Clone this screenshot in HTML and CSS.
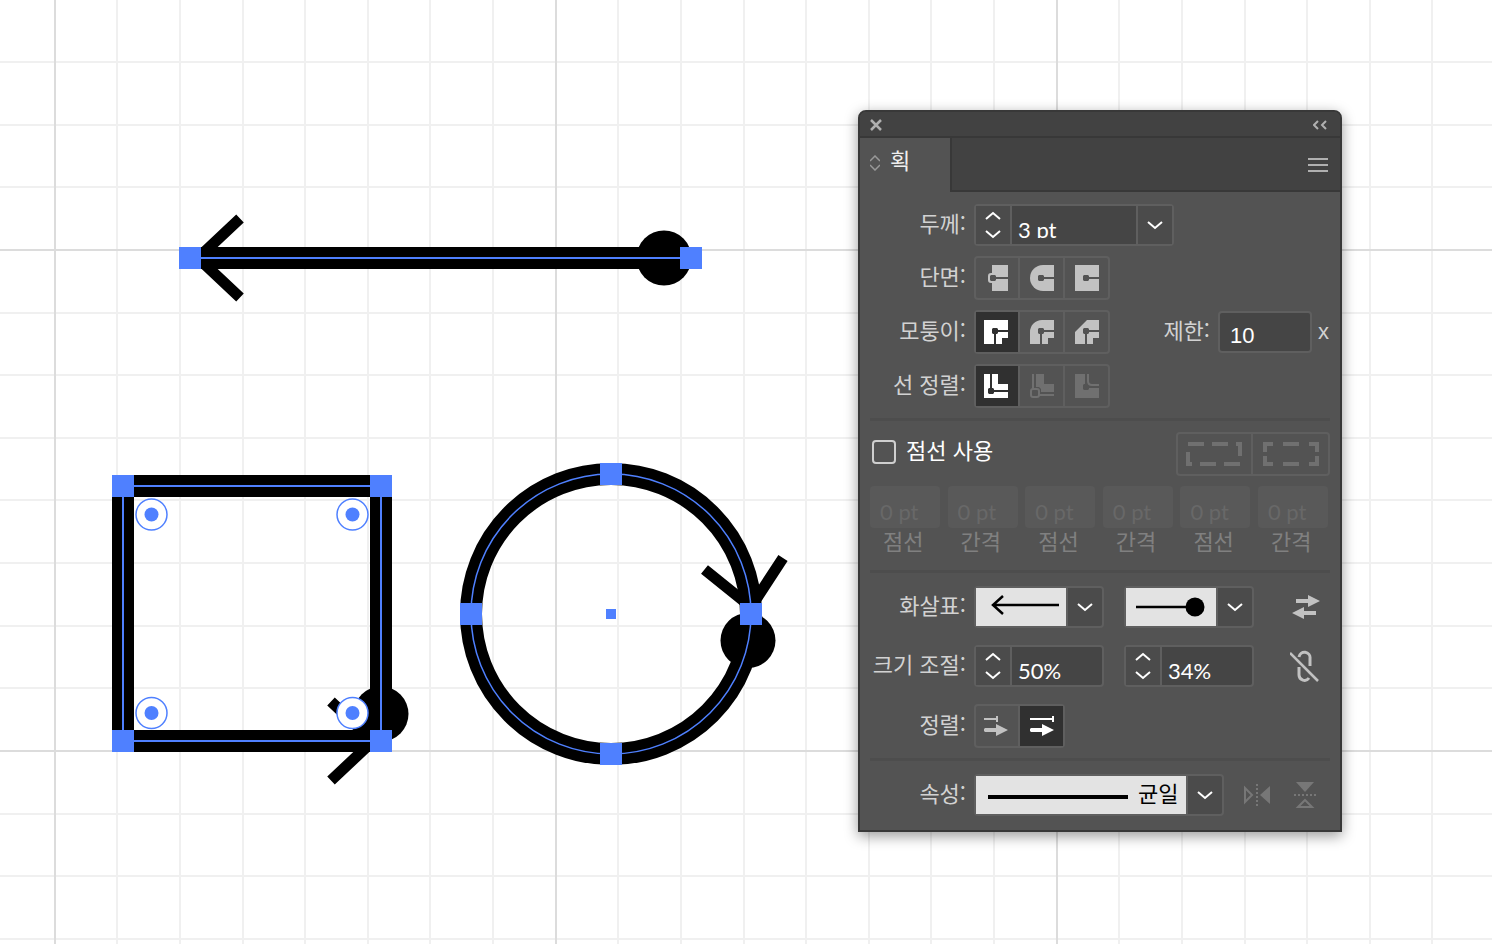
FILE: index.html
```html
<!DOCTYPE html>
<html lang="ko">
<head>
  <meta charset="UTF-8">
  <meta name="viewport" content="width=device-width, initial-scale=1.0">
  <title>획</title>
  <link rel="stylesheet" href="styles.css">
</head>
<body>
  <main class="workspace">
    <svg class="artboard" aria-hidden="true">
      <defs>
        <pattern id="grid" x="54" y="249" width="501" height="501" patternUnits="userSpaceOnUse">
          <path class="grid-minor" d="M63 0v501M126 0v501M189 0v501M251 0v501M314 0v501M376 0v501M439 0v501M0 64h501M0 126h501M0 189h501M0 251h501M0 314h501M0 377h501M0 439h501"/>
          <path class="grid-major" d="M1 0v501M0 1h501"/>
        </pattern>
      </defs>
      <rect width="100%" height="100%" fill="url(#grid)"/>

      <!-- line -->
      <path class="stroke" d="M198 258H664"/>
      <path class="arrow-head" d="M240 218.500L198 258l42 39.500"/>
      <circle cx="664" cy="258" r="27.500"/>
      <path class="guide" d="M190 258H691"/>
      <path class="anchor" d="M179 247h22v22h-22zM680 247h22v22h-22z"/>

      <!-- rectangle -->
      <rect class="stroke" x="123" y="486" width="258" height="255"/>
      <path class="arrow-head" d="M331 701.500L373 741l-42 39.500"/>
      <circle cx="381" cy="714" r="27.500"/>
      <rect class="guide" x="123" y="486" width="258" height="255"/>
      <path class="anchor" d="M112 475h22v22h-22zM370 475h22v22h-22zM112 730h22v22h-22zM370 730h22v22h-22z"/>
      <g class="corner">
        <circle cx="151.500" cy="514.500" r="15.500"/>
        <circle cx="352.500" cy="514.500" r="15.500"/>
        <circle cx="151.500" cy="713" r="15.500"/>
        <circle cx="352.500" cy="713" r="15.500"/>
      </g>
      <g class="anchor">
        <circle cx="151.500" cy="514.500" r="7"/>
        <circle cx="352.500" cy="514.500" r="7"/>
        <circle cx="151.500" cy="713" r="7"/>
        <circle cx="352.500" cy="713" r="7"/>
      </g>

      <!-- ellipse -->
      <circle class="stroke" cx="611" cy="614" r="140"/>
      <path class="arrow-head" d="M704.500 569.500L751 607l32-49"/>
      <circle cx="748" cy="640.500" r="27.500"/>
      <circle class="guide guide-thin" cx="611" cy="614" r="140"/>
      <path class="anchor" d="M600 463h22v22h-22zM600 743h22v22h-22zM460 603h22v22h-22zM740 603h22v22h-22zM606 609h10v10h-10z"/>
    </svg>

    <section class="panel" aria-label="획">
      <header class="title-bar">
        <button class="plain" aria-label="닫기">
          <svg width="12" height="12"><path class="line-bold" d="M1 1l10 10M11 1L1 11"/></svg>
        </button>
        <button class="plain" aria-label="축소">
          <svg width="14" height="10"><path class="line" d="M5 1L1 5l4 4M13 1L9 5l4 4"/></svg>
        </button>
      </header>
      <div class="tab-bar">
        <button class="tab">
          <svg width="10" height="16"><path class="line-thin" d="M0 6l5-5 5 5M0 10l5 5 5-5"/></svg>
          획
        </button>
        <button class="plain" aria-label="메뉴">
          <svg width="20" height="14"><path class="line" d="M0 1h20M0 7h20M0 13h20"/></svg>
        </button>
      </div>

      <div class="group">
        <div class="row">
          <label class="name" for="weight">두께:</label>
          <div class="box box-weight">
            <div class="stepper">
              <button aria-label="증가"><svg width="16" height="9"><path class="line" d="M1 8l7-6 7 6"/></svg></button>
              <button aria-label="감소"><svg width="16" height="9"><path class="line" d="M1 1l7 6 7-6"/></svg></button>
            </div>
            <input class="value" id="weight" type="text" value="3 pt">
            <div class="drop">
              <select aria-label="두께 목록"><option></option></select>
              <svg class="chevron" width="16" height="9"><path class="line" d="M1 1l7 6 7-6"/></svg>
            </div>
          </div>
        </div>

        <div class="row">
          <span class="name">단면:</span>
          <div class="buttons">
            <button aria-label="평평한 단면"><svg width="24" height="26"><path d="M8 0h16v26H8v-8H7a3 3 0 0 1-3-3v-4a3 3 0 0 1 3-3h1z"/><path class="cut" d="M7 10h4l1 1v1h12v2H12v1l-1 1H7l-1-1v-4z"/></svg></button>
            <button aria-label="둥근 단면"><svg width="24" height="26"><path d="M13 0h11v26H13a13 13 0 0 1 0-26z"/><path class="cut" d="M9 10h4l1 1v1h10v2H14v1l-1 1H9l-1-1v-4z"/></svg></button>
            <button aria-label="돌출된 단면"><svg width="24" height="26"><path d="M0 0h24v26H0z"/><path class="cut" d="M9 10h4l1 1v1h10v2H14v1l-1 1H9l-1-1v-4z"/></svg></button>
          </div>
        </div>

        <div class="row">
          <span class="name">모퉁이:</span>
          <div class="buttons">
            <button class="active" aria-label="각진 모퉁이"><svg width="24" height="24"><path d="M0 0h24v18h-6v6H0z"/><path class="cut" d="M9 8h4l1 1v1h10v2H14v1l-1 1h-1v10h-2V14H9l-1-1V9z"/></svg></button>
            <button aria-label="둥근 모퉁이"><svg width="24" height="24"><path d="M12 0h12v18h-6v6H0V12A12 12 0 0 1 12 0z"/><path class="cut" d="M9 8h4l1 1v1h10v2H14v1l-1 1h-1v10h-2V14H9l-1-1V9z"/></svg></button>
            <button aria-label="경사 모퉁이"><svg width="24" height="24"><path d="M12 0h12v18h-6v6H0V12z"/><path class="cut" d="M9 8h4l1 1v1h10v2H14v1l-1 1h-1v10h-2V14H9l-1-1V9z"/></svg></button>
          </div>
          <div class="limit">
            <label for="limit">제한:</label>
            <div class="box"><input class="value value-plain" id="limit" type="text" value="10"></div>
            <span class="unit">x</span>
          </div>
        </div>

        <div class="row">
          <span class="name">선 정렬:</span>
          <div class="buttons">
            <button class="active" aria-label="가운데"><svg width="24" height="24"><path d="M0 0h14v10h10v14H0z"/><path class="cut" d="M6 0h2v14h1l1 1v1h14v2H10v1l-1 1H5l-1-1v-4l1-1h1z"/></svg></button>
            <button disabled aria-label="안쪽"><svg width="24" height="24"><path d="M6 0h8v10h10v8H11v-3l-2-2H6z"/><path class="line" d="M3 0v15M9 21h15"/><rect class="line" x="1" y="15" width="8" height="8" rx="2"/></svg></button>
            <button disabled aria-label="바깥쪽"><svg width="24" height="24"><path d="M0 0h10v10H9l-1 1v4l1 1h4l1-1v-1h10v10H0z"/><path class="line" d="M13 0v7q0 4 4 4h7"/></svg></button>
          </div>
        </div>
      </div>

      <div class="group group-dash">
        <div class="row dash-row">
          <label class="check"><input type="checkbox">점선 사용</label>
          <div class="buttons buttons-dash">
            <button disabled aria-label="정확한 점선"><svg width="56" height="24"><path d="M2 0h16v4H2zM26 0h16v4H26zM50 0h6v14h-4V4h-2zM0 10h4v10h2v4H0zM14 20h16v4H14zM38 20h16v4H38z"/></svg></button>
            <button disabled aria-label="모퉁이에 맞춤"><svg width="56" height="24"><path d="M0 0h10v4H4v6H0zM20 0h16v4H20zM46 0h10v10h-4V4h-6zM0 14h4v6h6v4H0zM20 20h16v4H20zM52 14h4v10H46v-4h6z"/></svg></button>
          </div>
        </div>
        <div class="dashes">
          <label><input class="value" type="text" value="0 pt" disabled>점선</label>
          <label><input class="value" type="text" value="0 pt" disabled>간격</label>
          <label><input class="value" type="text" value="0 pt" disabled>점선</label>
          <label><input class="value" type="text" value="0 pt" disabled>간격</label>
          <label><input class="value" type="text" value="0 pt" disabled>점선</label>
          <label><input class="value" type="text" value="0 pt" disabled>간격</label>
        </div>
      </div>

      <div class="group group-arrows">
        <div class="row">
          <span class="name">화살표:</span>
          <div class="pair">
            <div class="box picker">
              <svg class="preview" width="90" height="38"><path class="preview-line" d="M83 17H17M27 8L17 17l10 9"/></svg>
              <select aria-label="시작 화살표"><option></option></select>
              <svg class="chevron" width="16" height="9"><path class="line" d="M1 1l7 6 7-6"/></svg>
            </div>
            <div class="box picker">
              <svg class="preview" width="90" height="38"><path class="preview-line" d="M10 19h55"/><circle cx="69" cy="19" r="9.500"/></svg>
              <select aria-label="끝 화살표"><option></option></select>
              <svg class="chevron" width="16" height="9"><path class="line" d="M1 1l7 6 7-6"/></svg>
            </div>
          </div>
          <button class="tool" aria-label="화살표 교체"><svg width="28" height="24"><path d="M4 4h12V0l12 6-12 6V8H4zM24 16H12v-4L0 18l12 6v-4h12z"/></svg></button>
        </div>

        <div class="row">
          <span class="name">크기 조절:</span>
          <div class="pair">
            <div class="box">
              <div class="stepper">
                <button aria-label="증가"><svg width="16" height="9"><path class="line" d="M1 8l7-6 7 6"/></svg></button>
                <button aria-label="감소"><svg width="16" height="9"><path class="line" d="M1 1l7 6 7-6"/></svg></button>
              </div>
              <input class="value" type="text" value="50%" aria-label="시작 크기">
            </div>
            <div class="box">
              <div class="stepper">
                <button aria-label="증가"><svg width="16" height="9"><path class="line" d="M1 8l7-6 7 6"/></svg></button>
                <button aria-label="감소"><svg width="16" height="9"><path class="line" d="M1 1l7 6 7-6"/></svg></button>
              </div>
              <input class="value" type="text" value="34%" aria-label="끝 크기">
            </div>
          </div>
          <button class="tool" aria-label="크기 연결"><svg width="32" height="32"><path class="line-bold" d="M0 3l28 28"/><path class="line-link" d="M9 7a5.500 5.500 0 0 1 11 1.500V16M9 17v8a5.500 5.500 0 0 0 10 3"/></svg></button>
        </div>

        <div class="row">
          <span class="name">정렬:</span>
          <div class="buttons">
            <button aria-label="패스 끝 너머로 확장"><svg width="24" height="20"><path d="M0 2h12V0h2v6h-2V4H0zM1 12h11V8l12 6-12 6v-4H1l-1-1v-2z"/></svg></button>
            <button class="active" aria-label="패스 끝에 배치"><svg width="24" height="20"><path d="M0 2h22V0h2v6h-2V4H0zM1 12h11V8l12 6-12 6v-4H1l-1-1v-2z"/></svg></button>
          </div>
        </div>
      </div>

      <div class="group group-profile">
        <div class="row">
          <label class="name" for="profile">속성:</label>
          <div class="box picker picker-profile">
            <svg class="preview" width="210" height="38"><path d="M12 19h140v4H12z"/></svg>
            <select id="profile"><option>균일</option></select>
            <svg class="chevron" width="16" height="9"><path class="line" d="M1 1l7 6 7-6"/></svg>
          </div>
          <div class="flips">
            <button disabled aria-label="가로로 뒤집기"><svg width="26" height="22"><path d="M26 2v18L16 11z"/><path class="line" d="M1 4l7 7-7 7z"/><path class="dots" d="M13 0v22"/></svg></button>
            <button disabled aria-label="세로로 뒤집기"><svg width="22" height="26"><path d="M2 0h18l-9 10z"/><path class="line" d="M4 25l7-7 7 7z"/><path class="dots" d="M0 13h22"/></svg></button>
          </div>
        </div>
      </div>
    </section>
  </main>
</body>
</html>
```
FILE: styles.css
```css
* {
  margin: 0;
  padding: 0;
  box-sizing: border-box;
}

body {
  background-color: #fff;
  font-family: "Noto Sans CJK KR", sans-serif;
  font-size: 22px;
  line-height: 28px;
  color: #d2d2d2;
}

button, input, select {
  font: inherit;
  color: inherit;
  background: none;
  border: none;
  appearance: none;
}

button {
  display: flex;
  align-items: center;
  justify-content: center;
}

svg {
  display: block;
  flex: none;
  fill: currentColor;
}

.workspace {
  position: relative;
  min-height: 100vh;
  overflow: hidden;
}

/* Canvas */
.artboard {
  position: absolute;
  width: 100%;
  height: 100%;
  fill: #000;
}

.grid-minor, .grid-major {
  fill: none;
  stroke: #f0f0f0;
  stroke-width: 2;
}

.grid-major {
  stroke: #dcdcdc;
}

.stroke {
  fill: none;
  stroke: #000;
  stroke-width: 22;
}

.arrow-head {
  fill: none;
  stroke: #000;
  stroke-width: 11;
}

.guide {
  fill: none;
  stroke: #4f80ff;
  stroke-width: 2;
}

.guide-thin {
  stroke-width: 1.5;
}

.anchor {
  fill: #4f80ff;
}

.corner {
  fill: #fff;
  stroke: #4f80ff;
  stroke-width: 1.5;
}

/* Panel */
.panel {
  position: absolute;
  left: 858px;
  top: 110px;
  width: 484px;
  background-color: #535353;
  border: 2px solid #383838;
  border-radius: 8px 8px 0 0;
  box-shadow: 0 4px 14px rgba(0, 0, 0, 0.4);
}

.title-bar {
  display: flex;
  justify-content: space-between;
  height: 26px;
  padding: 2px 13px 0 10px;
  background-color: #424242;
  border-bottom: 2px solid #383838;
  border-radius: 6px 6px 0 0;
}

.plain {
  color: #b0b0b0;
}

.tab-bar {
  display: flex;
  justify-content: space-between;
  height: 54px;
  padding-right: 12px;
  background-color: #424242;
  box-shadow: inset 0 -2px #383838;
}

.tab {
  width: 92px;
  justify-content: flex-start;
  gap: 10px;
  padding: 0 0 12px 10px;
  color: #f0f0f0;
  background-color: #535353;
  border-right: 2px solid #383838;
}

.tab svg {
  color: #999;
  margin-top: 8px;
}

.group {
  display: flex;
  flex-direction: column;
  gap: 10px;
  margin: 0 10px;
  padding: 12px 0 10px;
}

.group + .group {
  border-top: 3px solid #4d4d4d;
  padding: 13px 0 14px;
}

.group + .group-dash {
  padding: 11px 0 18px;
}

.group + .group-arrows {
  gap: 17px;
  padding-bottom: 10px;
}

.row {
  display: flex;
  align-items: center;
}

.name {
  width: 96px;
  margin-right: 8px;
  padding-bottom: 7px;
  text-align: right;
  white-space: nowrap;
}

/* Fields */
.box {
  display: flex;
  width: 130px;
  height: 42px;
  background-color: #454545;
  border: 2px solid #5f5f5f;
  border-radius: 4px;
}

.box-weight {
  width: 200px;
}

.stepper {
  width: 36px;
  background-color: #4b4b4b;
  border-right: 2px solid #5f5f5f;
  color: #fff;
}

.stepper button {
  width: 100%;
  height: 19px;
}

.value {
  flex: 1;
  min-width: 0;
  height: 32px;
  padding: 14px 6px 0;
  font-family: Lato, sans-serif;
  line-height: 18px;
  color: #fff;
}

.value-plain {
  padding: 14px 10px 0;
  font-family: "Liberation Sans", sans-serif;
}

.drop {
  position: relative;
  width: 36px;
  background-color: #4b4b4b;
  border-left: 2px solid #5f5f5f;
}

.drop select {
  width: 100%;
  height: 100%;
}

.chevron {
  position: absolute;
  right: 9px;
  top: 15px;
  color: #fff;
  pointer-events: none;
}

.limit {
  display: flex;
  align-items: center;
  margin-left: auto;
}

.limit label {
  margin-right: 8px;
  padding-bottom: 7px;
}

.limit .box {
  width: 94px;
}

.unit {
  margin: 0 1px 0 6px;
  font-family: "Liberation Sans", sans-serif;
}

/* Button groups */
.buttons {
  display: flex;
  height: 44px;
  border: 2px solid #5f5f5f;
  border-radius: 4px;
}

.buttons button {
  width: 45px;
  color: #c2c2c2;
  border-left: 2px solid #5f5f5f;
}

.buttons button:first-child {
  width: 42px;
  padding-right: 2px;
  border-left: none;
}

.buttons .active {
  color: #fff;
  background-color: #303030;
}

.buttons button:disabled {
  color: #707070;
}

.buttons .buttons-dash button,
.buttons-dash button {
  width: 77px;
}

.buttons-dash button:first-child {
  width: 73px;
}

.cut {
  fill: #535353;
}

.active .cut {
  fill: #303030;
}

/* Dashed line */
.dash-row {
  justify-content: space-between;
}

.check {
  display: flex;
  align-items: center;
  gap: 10px;
  padding: 0 0 10px 2px;
  color: #fff;
}

.check input {
  width: 24px;
  height: 24px;
  margin-top: 6px;
  border: 2px solid #cfcfcf;
  border-radius: 4px;
}

.dashes {
  display: flex;
  justify-content: space-between;
  padding-right: 2px;
}

.dashes label {
  display: flex;
  flex-direction: column;
  width: 70px;
  line-height: 24px;
  text-indent: 13px;
  color: #808080;
}

.dashes .value {
  flex: none;
  width: 100%;
  height: 42px;
  padding: 16px 10px 8px;
  text-indent: 0;
  color: #686868;
  background-color: #595959;
  border-radius: 4px;
}

/* Arrowheads and profile */
.pair {
  display: flex;
  gap: 20px;
}

.picker {
  position: relative;
  background-color: #4b4b4b;
}

.preview {
  background-color: #e3e3e3;
  border-right: 2px solid #5f5f5f;
  box-sizing: content-box;
  fill: #000;
}

.preview-line {
  fill: none;
  stroke: #000;
  stroke-width: 2.5;
}

.picker select {
  position: absolute;
  width: 100%;
  height: 100%;
}

.picker-profile {
  width: 250px;
}

.picker-profile select {
  padding: 0 0 6px 162px;
  color: #000;
}

.tool {
  width: 32px;
  height: 32px;
  margin-left: 36px;
  color: #c2c2c2;
}

.flips {
  display: flex;
  gap: 16px;
  margin-left: 17px;
}

.flips button {
  width: 32px;
  height: 32px;
  color: #777;
}

/* Icon strokes */
.line, .line-thin, .line-bold, .line-link, .dots {
  fill: none;
  stroke: currentColor;
  stroke-width: 2;
}

.line-thin {
  stroke-width: 1.5;
}

.line-bold {
  stroke-width: 2.5;
}

.line-link {
  stroke-width: 3;
}

.dots {
  stroke-dasharray: 2 2;
}
```
